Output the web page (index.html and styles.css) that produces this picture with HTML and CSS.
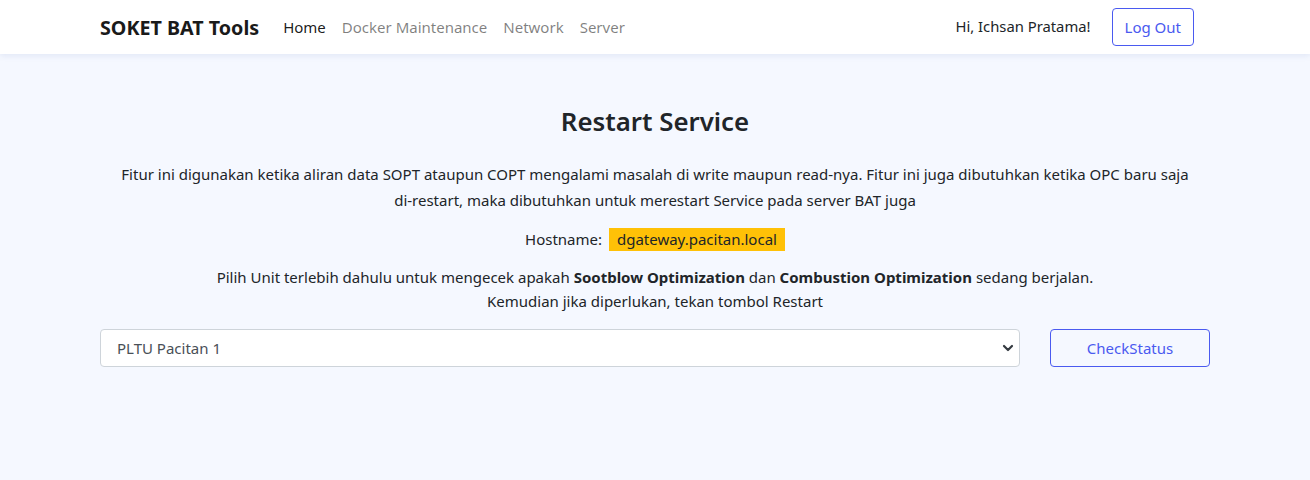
FILE: index.html
```html
<!DOCTYPE html>
<html lang="id">
<head>
<meta charset="utf-8">
<title>SOKET BAT Tools</title>
<link rel="stylesheet" href="styles.css">
</head>
<body>
<nav class="navbar">
  <div class="nav-inner">
    <div class="brand">SOKET BAT Tools</div>
    <ul class="nav-links">
      <li class="active">Home</li>
      <li>Docker Maintenance</li>
      <li>Network</li>
      <li>Server</li>
    </ul>
    <div class="nav-right">
      <span class="greet">Hi, Ichsan Pratama!</span>
      <button class="btn btn-outline">Log Out</button>
    </div>
  </div>
</nav>
<main class="content">
  <h3 class="title">Restart Service</h3>
  <p class="desc">Fitur ini digunakan ketika aliran data SOPT ataupun COPT mengalami masalah di write maupun read-nya. Fitur ini juga dibutuhkan ketika OPC baru saja di-restart, maka dibutuhkan untuk merestart Service pada server BAT juga</p>
  <p class="host">Hostname: <span class="badge">dgateway.pacitan.local</span></p>
  <p class="hint">Pilih Unit terlebih dahulu untuk mengecek apakah <b>Sootblow Optimization</b> dan <b>Combustion Optimization</b> sedang berjalan.<br>Kemudian jika diperlukan, tekan tombol Restart</p>
  <div class="controls">
    <div class="select-wrap">
      <select class="select">
        <option>PLTU Pacitan 1</option>
        <option>PLTU Pacitan 2</option>
      </select>
      <svg class="chev" width="12" height="8" viewBox="0 0 12 8"><path d="M2 2l4 4 4-4" fill="none" stroke="#343a40" stroke-width="2.2" stroke-linecap="round" stroke-linejoin="round"/></svg>
    </div>
    <button class="btn btn-outline btn-check">CheckStatus</button>
  </div>
</main>
</body>
</html>
```
FILE: styles.css
```css
* { box-sizing: border-box; }
html, body { margin: 0; padding: 0; }
body {
  font-family: "Noto Sans", "Open Sans", sans-serif;
  font-size: 15px;
  color: #212529;
  background: #f5f8ff;
  min-height: 480px;
}
.navbar {
  background: #fff;
  height: 54px;
  box-shadow: 0 2px 6px rgba(60, 90, 170, 0.10);
  position: relative;
}
.nav-inner {
  width: 1110px;
  margin: 0 auto;
  height: 54px;
  display: flex;
  align-items: center;
  padding-right: 16px;
}
.brand {
  font-weight: 700;
  font-size: 19.7px;
  color: #1a1a1a;
  margin-right: 24px;
  margin-top: 1px;
}
.nav-links {
  display: flex;
  list-style: none;
  margin: 0;
  padding: 0;
  gap: 16px;
}
.nav-links li { color: rgba(0,0,0,0.5); font-size: 15px; }
.nav-links li.active { color: rgba(0,0,0,0.9); }
.nav-right {
  margin-left: auto;
  display: flex;
  align-items: center;
  gap: 21px;
}
.greet { font-size: 14.8px; color: #212529; margin-top: -2px; }
.btn {
  font-family: inherit;
  font-size: 15px;
  background: transparent;
  border-radius: 4px;
  cursor: pointer;
}
.btn-outline {
  border: 1px solid #4a5af0;
  color: #4a5af0;
  height: 38px;
  padding: 0 12px;
}
.content {
  width: 1110px;
  margin: 0 auto;
  padding-top: 49px;
  text-align: center;
}
.title {
  font-size: 25.8px;
  font-weight: 600;
  margin: 0 0 22px;
  line-height: 36px;
  color: #212529;
}
.desc {
  margin: 0 0 14px;
  line-height: 26px;
  padding: 0 20px;
}
.host { margin: 0 0 14px; line-height: 24px; }
.badge {
  background: #ffc107;
  padding: 1px 8px 2px;
  margin-left: 3px;
}
.hint { margin: 0 0 16px; line-height: 24px; }
.controls {
  display: flex;
  gap: 30px;
  text-align: left;
}
.select-wrap { position: relative; width: 920px; }
.select {
  appearance: none;
  -webkit-appearance: none;
  width: 100%;
  height: 38px;
  border: 1px solid #ced4da;
  border-radius: 4px;
  background: #fff;
  font-family: inherit;
  font-size: 15px;
  color: #495057;
  padding: 0 16px;
}
.chev { position: absolute; right: 6px; top: 15px; pointer-events: none; }
.btn-check { width: 160px; }
```
